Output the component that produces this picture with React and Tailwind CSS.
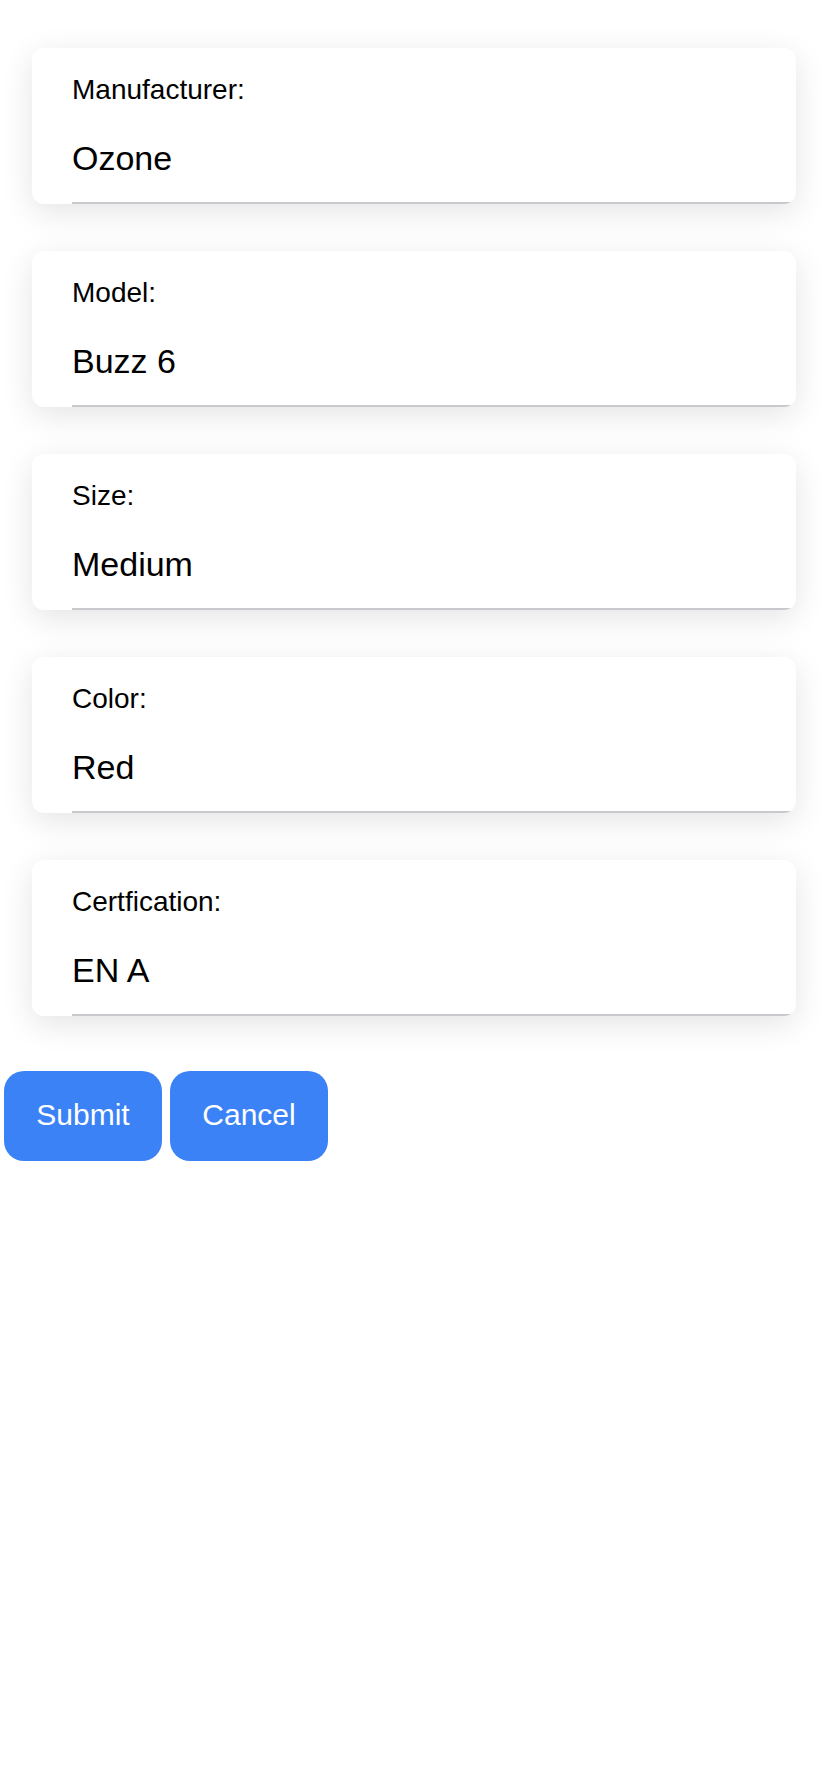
const fields = [
  { label: "Manufacturer:", value: "Ozone" },
  { label: "Model:", value: "Buzz 6" },
  { label: "Size:", value: "Medium" },
  { label: "Color:", value: "Red" },
  { label: "Certfication:", value: "EN A" },
];

const Field = ({ label, value }) => (
  <div className="overflow-hidden rounded-[12px] bg-white pl-[40px] pt-[26px] shadow-[0_8px_32px_rgba(0,0,0,0.11)]">
    <label className="block text-[28px] leading-[32px] text-black">{label}</label>
    <input
      readOnly
      value={value}
      className="mt-[32px] block w-full border-0 border-b-2 border-[#c9c8cd] bg-transparent p-0 pb-[24px] text-[34px] leading-[40px] text-black outline-none"
      style={{ fontFamily: "inherit" }}
    />
  </div>
);

const App = () => {
  return (
    <div
      className="min-h-screen bg-white pt-[48px]"
      style={{ fontFamily: '"Liberation Sans", Arial, sans-serif' }}
    >
      <div className="flex flex-col gap-[47px] px-[32px]">
        {fields.map((f) => (
          <Field key={f.label} label={f.label} value={f.value} />
        ))}
      </div>

      <div className="mt-[55px] flex gap-[8px] pl-[4px]">
        <button className="h-[90px] w-[158px] rounded-[20px] bg-[#3b82f6] pb-[4px] text-[30px] text-white">
          Submit
        </button>
        <button className="h-[90px] w-[158px] rounded-[20px] bg-[#3b82f6] pb-[4px] text-[30px] text-white">
          Cancel
        </button>
      </div>
    </div>
  );
};

export default App;
